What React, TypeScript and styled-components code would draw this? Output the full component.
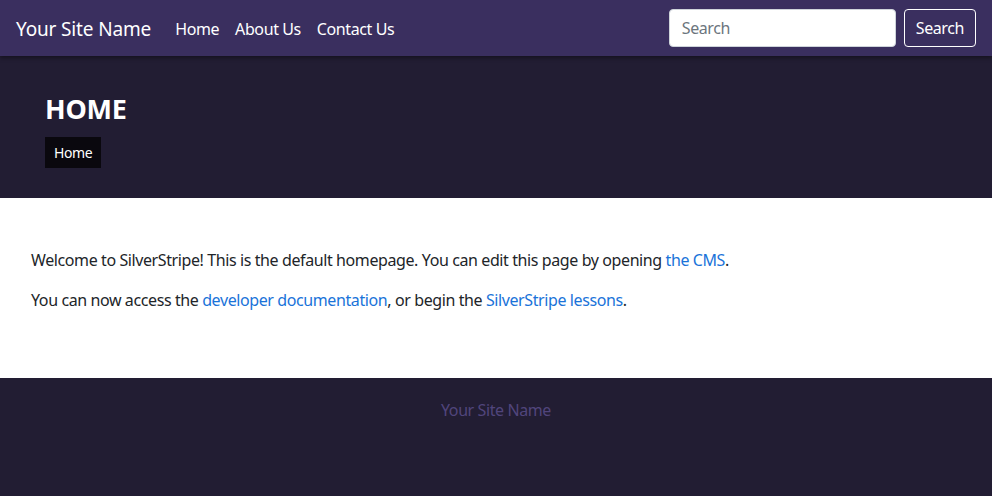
import React from "react";
import styled, { createGlobalStyle } from "styled-components";

const Global = createGlobalStyle`
  html, body { margin: 0; padding: 0; background: #221d33; }
  body { font-family: "Noto Sans", "Open Sans", sans-serif; letter-spacing: -0.4px; }
  * { box-sizing: border-box; }
`;

const Navbar = styled.nav`
  height: 56px;
  background: #3a2f5f;
  display: flex;
  align-items: center;
  padding: 0 16px;
  box-shadow: 0 2px 4px rgba(0,0,0,0.4);
  position: relative;
  z-index: 1;
`;

const Brand = styled.a`
  color: #fff;
  font-size: 19px;
  letter-spacing: -0.15px;
  text-decoration: none;
  margin-right: 24px;
  margin-top: 2px;
`;

const NavLinks = styled.ul`
  display: flex;
  list-style: none;
  margin: 0;
  padding: 0;
  gap: 16px;
  flex: 1;
  margin-top: 2px;
`;

const NavLink = styled.a`
  color: #fff;
  font-size: 16px;
  text-decoration: none;
`;

const SearchForm = styled.form`
  display: flex;
  gap: 8px;
`;

const SearchInput = styled.input`
  width: 227px;
  height: 38px;
  border: 1px solid #ced4da;
  border-radius: 4px;
  padding: 0 12px;
  font-family: inherit;
  letter-spacing: inherit;
  font-size: 16px;
  color: #495057;
  &::placeholder { color: #6c757d; }
`;

const SearchButton = styled.button`
  height: 38px;
  padding: 0 11px;
  background: transparent;
  border: 1px solid #fff;
  border-radius: 4px;
  color: #fff;
  font-family: inherit;
  letter-spacing: inherit;
  font-size: 16px;
`;

const Header = styled.header`
  background: #221d33;
  height: 142px;
  padding: 37px 45px 0;
`;

const Title = styled.h1`
  margin: 0 0 12px;
  color: #fff;
  font-size: 27px;
  font-weight: 700;
  line-height: 32px;
  letter-spacing: -0.2px;
`;

const Crumb = styled.span`
  display: inline-block;
  background: #0a080e;
  color: #fff;
  font-size: 14px;
  padding: 0 9px;
  height: 31px;
  line-height: 31px;
`;

const Main = styled.main`
  background: #fff;
  height: 180px;
  padding: 50px 31px 0;
`;

const Para = styled.p`
  margin: 0 0 16px;
  color: #212529;
  font-size: 16px;
  line-height: 24px;
`;

const Link = styled.a`
  color: #1a73d9;
  text-decoration: none;
`;

const Footer = styled.footer`
  background: #221d33;
  height: 118px;
  padding-top: 21px;
  text-align: center;
  color: #51457c;
  font-size: 16px;
`;

export default function App() {
  return (
    <>
      <Global />
      <Navbar>
        <Brand href="#">Your Site Name</Brand>
        <NavLinks>
          <li><NavLink href="#">Home</NavLink></li>
          <li><NavLink href="#">About Us</NavLink></li>
          <li><NavLink href="#">Contact Us</NavLink></li>
        </NavLinks>
        <SearchForm onSubmit={(e) => e.preventDefault()}>
          <SearchInput placeholder="Search" />
          <SearchButton type="submit">Search</SearchButton>
        </SearchForm>
      </Navbar>
      <Header>
        <Title>HOME</Title>
        <Crumb>Home</Crumb>
      </Header>
      <Main>
        <Para>
          Welcome to SilverStripe! This is the default homepage. You can edit this page by opening <Link href="#">the CMS</Link>.
        </Para>
        <Para>
          You can now access the <Link href="#">developer documentation</Link>, or begin the <Link href="#">SilverStripe lessons</Link>.
        </Para>
      </Main>
      <Footer>Your Site Name</Footer>
    </>
  );
}
